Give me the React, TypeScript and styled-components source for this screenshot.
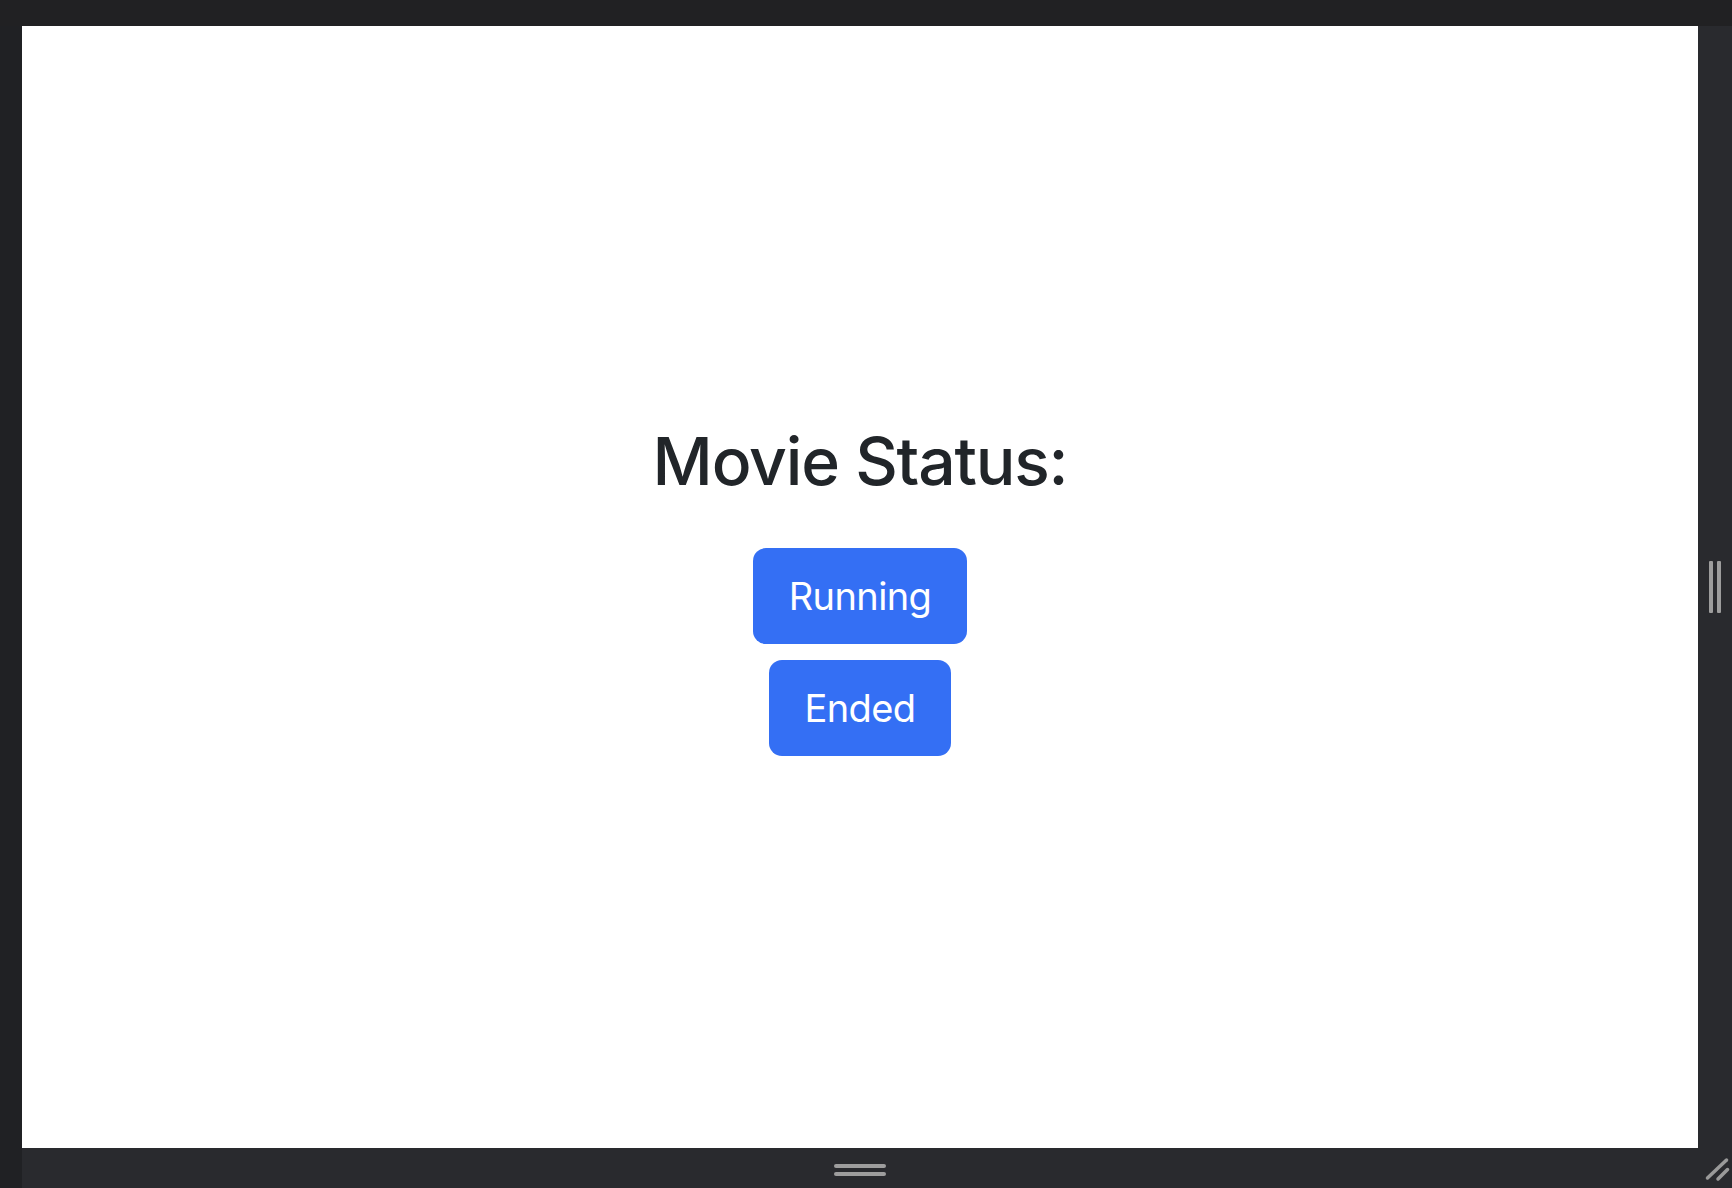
import React from "react";
import styled, { createGlobalStyle } from "styled-components";

const GlobalStyle = createGlobalStyle`
  html, body {
    margin: 0;
    padding: 0;
    background: #212123;
  }
  body {
    font-family: Inter, "Noto Sans", "Liberation Sans", sans-serif;
  }
`;

const Frame = styled.div`
  width: 1732px;
  height: 1188px;
  display: grid;
  grid-template-rows: 26px 1fr;
  grid-template-columns: 22px 1fr;
  background: #212123;
`;

const TopBar = styled.div`
  grid-column: 1 / 3;
  background: #212123;
`;

const Gutter = styled.div`
  background: #202124;
`;

const Device = styled.div`
  display: grid;
  grid-template-columns: 1fr 34px;
  grid-template-rows: 1122px 40px;
  background: #292a2e;
`;

const Viewport = styled.main`
  background: #ffffff;
  display: flex;
  flex-direction: column;
  align-items: center;
  justify-content: center;
  padding-top: 4px;
`;

const Title = styled.h1`
  margin: 0 0 46px;
  font-size: 66px;
  line-height: 1.2;
  font-weight: 500;
  letter-spacing: -1.2px;
  color: #212529;
`;

const ButtonStack = styled.div`
  display: flex;
  flex-direction: column;
  align-items: center;
  gap: 16px;
`;

const StatusButton = styled.button`
  height: 96px;
  padding: 0 36px;
  display: inline-flex;
  align-items: center;
  justify-content: center;
  border: none;
  border-radius: 13px;
  background: #346ff4;
  color: #ffffff;
  font-family: inherit;
  font-size: 38px;
  font-weight: 400;
  letter-spacing: -0.6px;
  cursor: pointer;
`;

const SideHandle = styled.div`
  display: flex;
  align-items: center;
  justify-content: center;
  gap: 4px;
  padding-right: 1px;
`;

const VBar = styled.span`
  width: 4px;
  height: 52px;
  border-radius: 1px;
  background: #9d9d9d;
`;

const BottomHandle = styled.div`
  display: flex;
  flex-direction: column;
  align-items: center;
  gap: 4px;
  padding-top: 16px;
`;

const HBar = styled.span`
  width: 52px;
  height: 4px;
  border-radius: 2px;
  background: #9d9d9d;
`;

const Corner = styled.div`
  display: flex;
`;

const statuses = ["Running", "Ended"];

export default function App() {
  return (
    <>
      <GlobalStyle />
      <Frame>
        <TopBar />
        <Gutter />
        <Device>
          <Viewport>
            <Title>Movie Status:</Title>
            <ButtonStack>
              {statuses.map((s) => (
                <StatusButton key={s}>{s}</StatusButton>
              ))}
            </ButtonStack>
          </Viewport>
          <SideHandle>
            <VBar />
            <VBar />
          </SideHandle>
          <BottomHandle>
            <HBar />
            <HBar />
          </BottomHandle>
          <Corner>
            <svg width="34" height="40" viewBox="0 0 34 40">
              <g stroke="#9a9a9a" strokeWidth="3.5" strokeLinecap="round">
                <line x1="9.5" y1="30" x2="28.5" y2="12" />
                <line x1="20" y1="31" x2="29.5" y2="21.5" />
              </g>
            </svg>
          </Corner>
        </Device>
      </Frame>
    </>
  );
}
